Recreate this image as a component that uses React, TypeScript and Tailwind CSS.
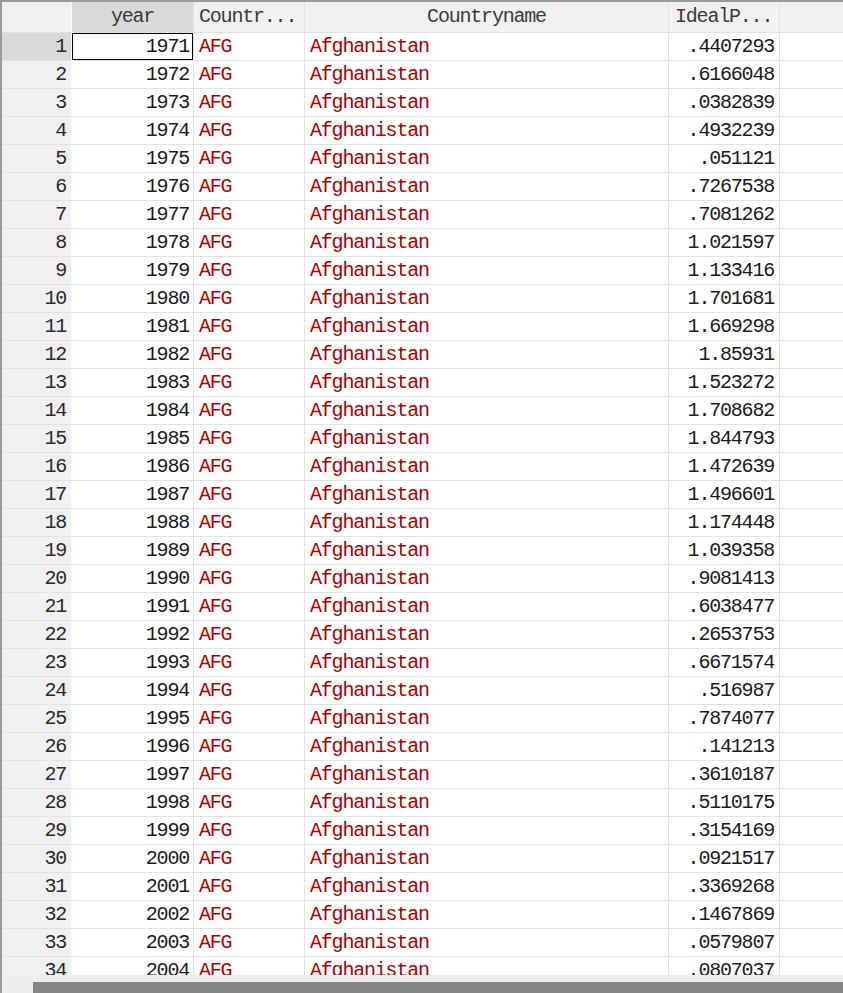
const rows: [number, string][] = [
  [1971, ".4407293"],
  [1972, ".6166048"],
  [1973, ".0382839"],
  [1974, ".4932239"],
  [1975, ".051121"],
  [1976, ".7267538"],
  [1977, ".7081262"],
  [1978, "1.021597"],
  [1979, "1.133416"],
  [1980, "1.701681"],
  [1981, "1.669298"],
  [1982, "1.85931"],
  [1983, "1.523272"],
  [1984, "1.708682"],
  [1985, "1.844793"],
  [1986, "1.472639"],
  [1987, "1.496601"],
  [1988, "1.174448"],
  [1989, "1.039358"],
  [1990, ".9081413"],
  [1991, ".6038477"],
  [1992, ".2653753"],
  [1993, ".6671574"],
  [1994, ".516987"],
  [1995, ".7874077"],
  [1996, ".141213"],
  [1997, ".3610187"],
  [1998, ".5110175"],
  [1999, ".3154169"],
  [2000, ".0921517"],
  [2001, ".3369268"],
  [2002, ".1467869"],
  [2003, ".0579807"],
  [2004, ".0807037"],
];

const cols = "grid grid-cols-[70px_122px_111px_364px_111px_1fr]";

export default function App() {
  return (
    <div
      className="w-[843px] h-[993px] overflow-hidden flex flex-col bg-white border-t-2 border-l-2 border-[#9a9a9a] text-[20px] tracking-[-1.2px] leading-none"
      style={{ fontFamily: '"Liberation Mono", "DejaVu Sans Mono", monospace' }}
    >
      {/* header */}
      <div className={`${cols} h-[31px] shrink-0 bg-[#f0f0f0] border-b border-[#e2e2e2] text-[#3a3a3a]`}>
        <div className="border-r border-[#fafafa]" />
        <div className="bg-[#d9d9d9] border-r border-[#e2e2e2] flex items-center justify-center">year</div>
        <div className="border-r border-[#e2e2e2] flex items-center pl-[5px]">Countr...</div>
        <div className="border-r border-[#e2e2e2] flex items-center justify-center">Countryname</div>
        <div className="border-r border-[#e2e2e2] flex items-center pl-[6px]">IdealP...</div>
        <div />
      </div>

      {/* body */}
      <div className="flex-1 overflow-hidden">
        {rows.map(([yr, v], i) => (
          <div key={yr} className={`${cols} h-[28px] border-b border-[#e2e2e2]`}>
            <div
              className={`flex items-center justify-end pr-[5px] text-[#2a2a2a] border-r border-[#fafafa] ${
                i === 0 ? "bg-[#d9d9d9]" : "bg-[#f0f0f0]"
              }`}
            >
              {i + 1}
            </div>
            <div
              className={`flex items-center justify-end pr-[4px] text-[#1a1a1a] border-r border-[#e2e2e2] ${
                i === 0 ? "shadow-[inset_0_0_0_1px_#000]" : ""
              }`}
            >
              {yr}
            </div>
            <div className="flex items-center pl-[5px] text-[#b00000] border-r border-[#e2e2e2]">AFG</div>
            <div className="flex items-center pl-[5px] text-[#b00000] border-r border-[#e2e2e2]">Afghanistan</div>
            <div className="flex items-center justify-end pr-[5px] text-[#1a1a1a] border-r border-[#e2e2e2]">{v}</div>
            <div />
          </div>
        ))}
      </div>

      {/* horizontal scrollbar */}
      <div className="h-[18px] shrink-0 bg-[#eeeeee] flex flex-col justify-end">
        <div className="h-[11px] ml-[31px] bg-[#858585]" />
      </div>
    </div>
  );
}
